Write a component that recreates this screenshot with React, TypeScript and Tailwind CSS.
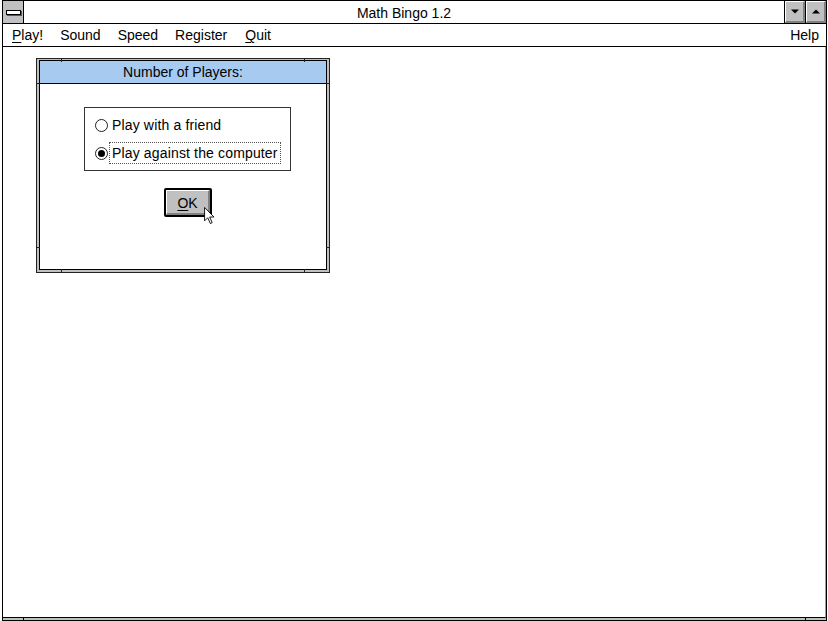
import React from "react";

// Classic Windows 3.x style window hosting the "Number of Players" dialog.

function Triangle({ up }: { up?: boolean }) {
  return (
    <svg width="8" height="5" viewBox="0 0 8 5" className="block">
      {up ? <polygon points="0,4.5 8,4.5 4,0.5" fill="#000" /> : <polygon points="0,0.5 8,0.5 4,4.5" fill="#000" />}
    </svg>
  );
}

function CaptionButton({ up }: { up?: boolean }) {
  return (
    <div className="w-[21px] border-l border-black bg-[#c0c0c0] flex">
      <div className="flex-1 flex items-center justify-center border-t border-l border-white border-r-2 border-b-2 border-r-[#808080] border-b-[#808080]">
        <Triangle up={up} />
      </div>
    </div>
  );
}

function Radio({ checked }: { checked?: boolean }) {
  return (
    <div className="w-[13px] h-[13px] rounded-full border border-[#222] bg-white flex items-center justify-center shrink-0">
      {checked && <div className="w-[7px] h-[7px] rounded-full bg-black" />}
    </div>
  );
}

function Cursor() {
  return (
    <svg width="11" height="17" viewBox="0 0 12 19" className="absolute left-[40px] top-[19px]">
      <polygon
        points="0.5,0.5 0.5,15.5 4,12 7,18.5 9,17.5 6.2,11.2 11,11.2"
        fill="#fff"
        stroke="#000"
        strokeWidth="1"
        strokeLinejoin="miter"
      />
    </svg>
  );
}

export default function App() {
  return (
    <div className="w-[828px] h-[621px] bg-white flex pl-[2px] pr-[1px] font-['Liberation_Sans',Arial,sans-serif] text-[14px] leading-none text-black select-none overflow-hidden">
      <div className="flex-1 flex flex-col border-l border-t border-r border-black">
        {/* Caption bar */}
        <div className="h-[23px] shrink-0 flex border-b border-black bg-white">
          <div className="w-[21px] border-r border-black bg-[#c0c0c0] flex items-center justify-center">
            <div className="w-[15px] h-[5px] border border-black bg-white shadow-[1px_1px_0_#555]" />
          </div>
          <div className="flex-1 flex items-center justify-center pt-[1px]">Math Bingo 1.2</div>
          <CaptionButton />
          <CaptionButton up />
        </div>

        {/* Menu bar */}
        <div className="h-[23px] shrink-0 flex items-center border-b border-black bg-white pl-[9px] pr-[7px]">
          <div className="flex gap-[17px]">
            <span>
              <span className="underline underline-offset-2">P</span>lay!
            </span>
            <span>Sound</span>
            <span>Speed</span>
            <span className="mr-[1px]">Register</span>
            <span>
              <span className="underline underline-offset-2">Q</span>uit
            </span>
          </div>
          <span className="ml-auto">Help</span>
        </div>

        {/* Client area */}
        <div className="flex-1 bg-white border-b border-black border-r border-r-[#9a9a9a] flex flex-col items-start">
          <div className="ml-[33px] mt-[11px] w-[294px] h-[215px] border border-[#222] bg-[#c0c0c0] px-[2px] pt-[1px] pb-[2px] relative">
            {/* frame notches */}
            <div className="absolute left-[24px] top-0 w-px h-[3px] bg-[#222]" />
            <div className="absolute right-[24px] top-0 w-px h-[3px] bg-[#222]" />
            <div className="absolute left-[24px] bottom-0 w-px h-[3px] bg-[#222]" />
            <div className="absolute right-[24px] bottom-0 w-px h-[3px] bg-[#222]" />
            <div className="absolute left-0 top-[24px] h-px w-[3px] bg-[#222]" />
            <div className="absolute right-0 top-[24px] h-px w-[3px] bg-[#222]" />
            <div className="absolute left-0 bottom-[24px] h-px w-[3px] bg-[#222]" />
            <div className="absolute right-0 bottom-[24px] h-px w-[3px] bg-[#222]" />

            <div className="h-full border border-black bg-white flex flex-col">
              <div className="h-[23px] shrink-0 border-b border-black bg-[#a6caf0] flex items-center justify-center">
                Number of Players:
              </div>
              <div className="ml-[44px] mt-[23px] w-[207px] flex flex-col items-center">
                <div className="w-[207px] h-[64px] border border-[#333] flex flex-col pt-[7px] gap-[8px] pl-[10px]">
                  <div className="h-[20px] flex items-center">
                    <Radio />
                    <span className="ml-[1px] border border-transparent px-[2px] py-[3px] tracking-[0.15px]">Play with a friend</span>
                  </div>
                  <div className="h-[20px] flex items-center">
                    <Radio checked />
                    <span className="ml-[1px] border border-dotted border-[#555] px-[2px] py-[3px] tracking-[0.15px]">Play against the computer</span>
                  </div>
                </div>
                <div className="mt-[17px] relative">
                  <div className="w-[48px] h-[29px] border-2 border-black rounded-[2px] bg-[#c0c0c0] flex">
                    <div className="flex-1 flex items-center justify-center border-t border-l border-white border-r-2 border-b-2 border-r-[#808080] border-b-[#808080] pt-[1px] pl-[1px]">
                      <span>
                        <span className="underline underline-offset-2">O</span>K
                      </span>
                    </div>
                  </div>
                  <Cursor />
                </div>
              </div>
            </div>
          </div>
        </div>

        {/* Sizing border bottom strip */}
        <div className="h-[3px] shrink-0 bg-[#c0c0c0] border-b border-black flex">
          <div className="w-[21px] border-r border-black" />
          <div className="flex-1" />
          <div className="w-[21px] border-l border-black" />
        </div>
      </div>
    </div>
  );
}
